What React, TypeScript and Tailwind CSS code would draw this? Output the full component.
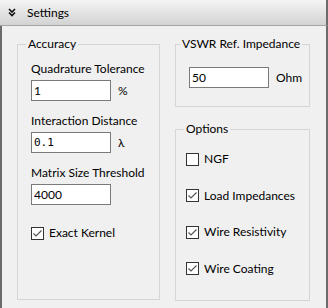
import React from "react";

const font = { fontFamily: 'Lato, "Noto Sans", "Liberation Sans", sans-serif' };

const Check: React.FC<{ checked: boolean; label: string }> = ({ checked, label }) => (
  <div className="flex items-center h-[16px] gap-[5px]">
    <span className="w-[13px] h-[13px] border border-[#333333] bg-white flex items-center justify-center shrink-0">
      {checked && (
        <svg width="11" height="11" viewBox="0 0 11 11">
          <path d="M1.5 5.5 L4 8 L9.5 2.5" fill="none" stroke="#555555" strokeWidth="1.2" />
        </svg>
      )}
    </span>
    <span className="text-black">{label}</span>
  </div>
);

const Field: React.FC<{ value: string; mono?: boolean }> = ({ value, mono }) => (
  <input
    readOnly
    defaultValue={value}
    className={
      mono
        ? "w-[80px] h-[21px] border border-[#7a7a7a] bg-white px-[2px] text-black text-[11px] font-['DejaVu_Sans_Mono',monospace] outline-none"
        : "w-[80px] h-[21px] border border-[#7a7a7a] bg-white px-[2px] text-black text-[12px] outline-none"
    }
  />
);

const Labeled: React.FC<{ label: string; value: string; unit: string; mono?: boolean }> = ({
  label,
  value,
  unit,
  mono,
}) => (
  <div className="flex flex-col">
    <span className="h-[16px] leading-[16px]">{label}</span>
    <div className="flex items-center gap-[7px] mt-[3px]">
      <Field value={value} mono={mono} />
      <span>{unit}</span>
    </div>
  </div>
);

export default function App() {
  return (
    <div
      className="w-[328px] h-[308px] flex flex-col bg-[#f0f0f0] text-[12px] text-black leading-[16px]"
      style={font}
    >
      <div className="h-[26px] shrink-0 flex items-center bg-linear-to-b from-[#f4f4f4] to-[#d3d3d3] border-b border-[#a3a3a3] border-r-2 border-r-[#6b6b6b]">
        <svg width="8" height="9" viewBox="0 0 8 9" className="ml-[8px]">
          <path d="M1 1 L4 4 L7 1 M1 4.5 L4 7.5 L7 4.5" fill="none" stroke="#111" strokeWidth="1.6" />
        </svg>
        <span className="ml-[11px] text-[12px]">Settings</span>
      </div>
      <div className="flex-1 flex gap-[15px] border-l-2 border-r-2 border-[#6b6b6b] pl-[15px] pt-[10px] pb-[8px]">
        <fieldset className="w-[143px] h-[264px] border border-[#d5d5d5] p-0 m-0">
          <legend className="ml-[8px] px-[2px] leading-[16px]">Accuracy</legend>
          <div className="flex flex-col gap-[12px] pl-[13px] pt-[9px]">
            <Labeled label="Quadrature Tolerance" value="1" unit="%" />
            <Labeled label="Interaction Distance" value="0.1" unit="λ" mono />
            <Labeled label="Matrix Size Threshold" value="4000" unit="" />
            <div className="mt-[8px]">
              <Check checked label="Exact Kernel" />
            </div>
          </div>
        </fieldset>
        <div className="w-[135px] flex flex-col gap-[14px]">
          <fieldset className="h-[71px] border border-[#d5d5d5] p-0 m-0">
            <legend className="ml-[4px] px-[2px] leading-[16px]">VSWR Ref. Impedance</legend>
            <div className="flex items-center gap-[7px] pl-[13px] pt-[15px]">
              <Field value="50" />
              <span>Ohm</span>
            </div>
          </fieldset>
          <fieldset className="h-[180px] border border-[#d5d5d5] p-0 m-0">
            <legend className="ml-[8px] px-[2px] leading-[16px]">Options</legend>
            <div className="flex flex-col gap-[20.5px] pl-[10px] pt-[14px]">
              <Check checked={false} label="NGF" />
              <Check checked label="Load Impedances" />
              <Check checked label="Wire Resistivity" />
              <Check checked label="Wire Coating" />
            </div>
          </fieldset>
        </div>
      </div>
    </div>
  );
}
